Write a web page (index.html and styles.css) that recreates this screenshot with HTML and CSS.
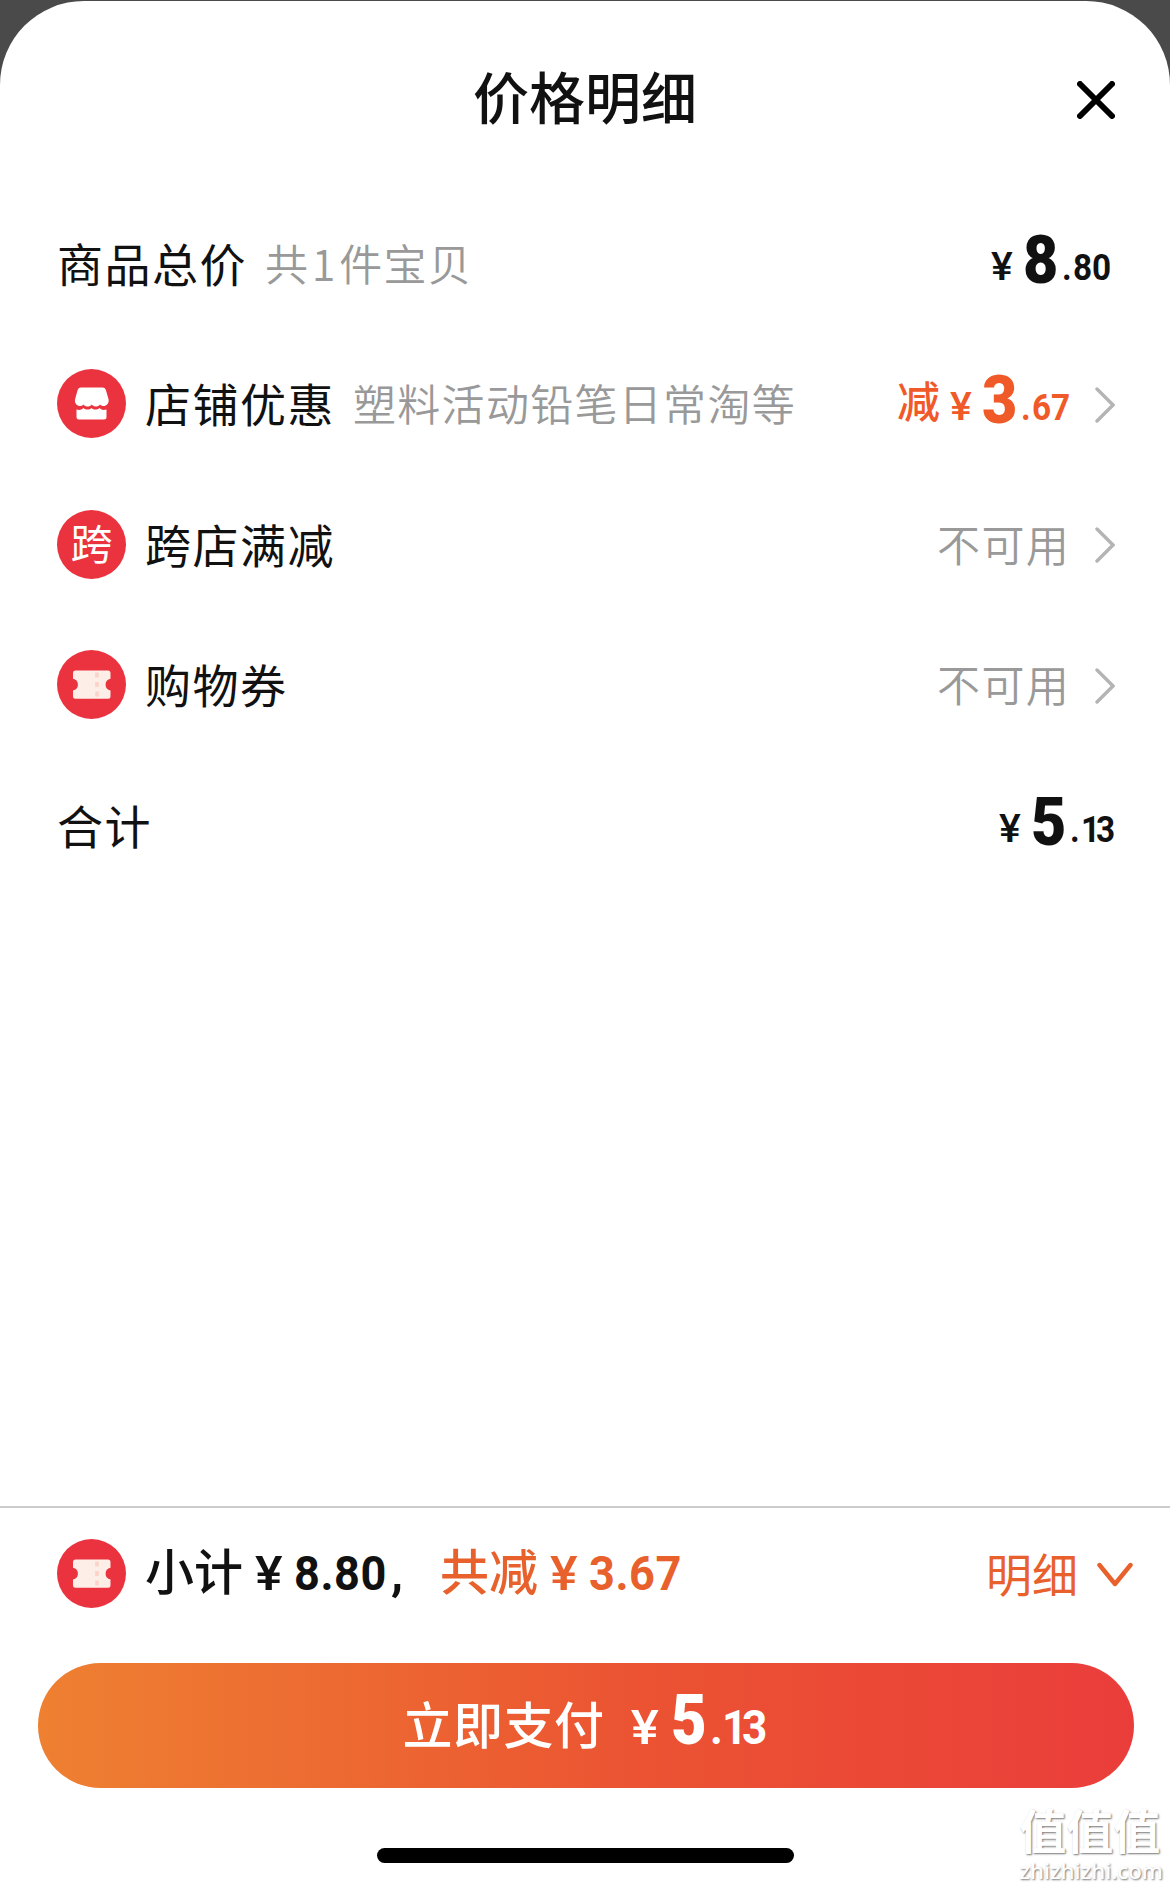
FILE: index.html
```html
<!DOCTYPE html>
<html lang="zh-CN">
<head>
<meta charset="utf-8">
<title>价格明细</title>
<link rel="stylesheet" href="styles.css">
</head>
<body>
<svg class="defs" aria-hidden="true">
  <symbol id="ticket" viewBox="0 0 69 69">
    <circle cx="34.5" cy="34.5" r="34.5" fill="#ea333f"/>
    <path d="M18.500 20.500h32.500a2.500 2.500 0 0 1 2.500 2.500v5.700a6 6 0 0 0 0 11.800v5.700a2.500 2.500 0 0 1-2.500 2.500h-32.500a2.500 2.500 0 0 1-2.500-2.500v-5.700a6 6 0 0 0 0-11.800v-5.700a2.500 2.500 0 0 1 2.500-2.500z" fill="#fdeee8"/>
    <path d="M40 22.500v5M40 32v5M40 41.500v5" stroke="#fbd3c8" stroke-width="3.600"/>
  </symbol>
  <symbol id="next" viewBox="0 0 20 36">
    <path d="M2 2 L18 18 L2 34" fill="none" stroke="#b4b4b4" stroke-width="3.400" stroke-linecap="round"/>
  </symbol>
</svg>
<main class="sheet">
  <header class="head">
    <h1 class="title">价格明细</h1>
    <svg class="close" viewBox="0 0 38 38"><path d="M3 3 35 35M35 3 3 35" stroke="#000" stroke-width="6" stroke-linecap="round"/></svg>
  </header>
  <section class="rows">
    <div class="row">
      <span class="name">商品总价</span><span class="note">共<span class="one">1</span>件宝贝</span>
      <span class="price end"><span class="yen">¥</span><b>8</b><i>.</i><span class="cents">80</span></span>
    </div>
    <div class="row">
      <svg class="badge" viewBox="0 0 69 69">
        <circle cx="34.500" cy="34.500" r="34.500" fill="#ea333f"/>
        <path d="M24 18.500h21.500a3.500 3.500 0 0 1 3.300 2.300l2.800 9.700c.8 5.500-5 8.500-8.500 5-2.400 2.800-6 2.800-8.300 0-2.300 2.800-5.900 2.800-8.300 0-3.500 3.500-9.300.5-8.500-5l2.700-9.700a3.500 3.500 0 0 1 3.300-2.300z" fill="#fff"/>
        <path d="M19.500 40.500c3 1 5 .4 7-1.400 2.500 2 5.600 2 8 0 2.400 2 5.500 2 8 0 2 1.800 4 2.400 7 1.400v7.500a2.500 2.500 0 0 1-2.500 2.500h-25a2.500 2.500 0 0 1-2.500-2.500z" fill="#fff"/>
      </svg>
      <span class="name">店铺优惠</span><span class="note">塑料活动铅笔日常淘等</span>
      <span class="price off end"><em>减</em><span class="yen">¥</span><b>3</b><i>.</i><span class="cents short">67</span></span>
      <svg class="next"><use href="#next"/></svg>
    </div>
    <div class="row">
      <span class="badge kua">跨</span>
      <span class="name">跨店满减</span>
      <span class="note end">不可用</span>
      <svg class="next"><use href="#next"/></svg>
    </div>
    <div class="row">
      <svg class="badge"><use href="#ticket"/></svg>
      <span class="name">购物券</span>
      <span class="note end">不可用</span>
      <svg class="next"><use href="#next"/></svg>
    </div>
    <div class="row">
      <span class="name">合计</span>
      <span class="price end"><span class="yen">¥</span><b>5</b><i>.</i><span class="cents thin"><span class="narrow">1</span>3</span></span>
    </div>
  </section>
  <footer class="foot">
    <div class="sum">
      <svg class="badge"><use href="#ticket"/></svg>
      <span class="sub">小计<span class="cur">¥</span><span class="num">8.80</span><span class="comma">,</span></span>
      <span class="sub save">共减<span class="cur">¥</span><span class="num">3.67</span></span>
      <span class="detail">明细</span>
      <svg class="down" viewBox="0 0 36 26"><path d="M2.500 3 18 22 33.500 3" fill="none" stroke="#e8612c" stroke-width="4.400" stroke-linecap="round" stroke-linejoin="round"/></svg>
    </div>
    <button class="pay" type="button"><span class="go">立即支付</span><span class="price"><span class="yen">¥</span><b>5</b><i>.</i><span class="cents"><span class="narrow">1</span>3</span></span></button>
    <div class="home"></div>
  </footer>
</main>
<div class="mark"><span class="mark-cn">值值值</span><span class="mark-url">zhizhizhi.com</span></div>
</body>
</html>
```

FILE: styles.css
```css
* { box-sizing: border-box; }
body {
  margin: 0;
  width: 1170px;
  height: 1887px;
  padding-top: 1px;
  background: #4a4a4a;
  color: #111;
  font-family: "Noto Sans CJK SC", sans-serif;
  position: relative;
  overflow: hidden;
}
.defs { position: absolute; width: 0; height: 0; }
.sheet {
  height: 1886px;
  display: flex;
  flex-direction: column;
  background: #fff;
  border-radius: 84px 84px 0 0;
}
.head {
  height: 192px;
  display: grid;
  grid-template-columns: 1fr auto 1fr;
  align-items: center;
}
.title { grid-column: 2; margin: 0; padding-bottom: 5px; font-size: 56px; font-weight: 500; line-height: 80px; }
.close { width: 38px; height: 38px; justify-self: end; margin-right: 55px; margin-top: 6px; }
.rows { flex: 1; padding: 0 54px 0 57px; }
.row { height: 140.500px; display: flex; align-items: center; }
.badge { flex: none; width: 69px; height: 69px; margin-right: 19px; }
.kua {
  border-radius: 50%;
  background: #ea333f;
  color: #fff;
  font-size: 42px;
  line-height: 64px;
  text-align: center;
}
.name { padding-bottom: 3px; font-size: 46px; letter-spacing: 1.500px; line-height: 66px; white-space: nowrap; }
.note { margin-left: 18px; padding-bottom: 3px; font-size: 43px; letter-spacing: 1.300px; line-height: 62px; color: #999; font-weight: 350; white-space: nowrap; }
.one { display: inline-block; width: 30px; text-align: center; }
.end { margin-left: auto; }
.next { flex: none; width: 20px; height: 36px; margin: 2px 1px 0 25px; }

/* Price figures: condensed digits in fixed-width cells */
.price { display: flex; align-items: baseline; padding-bottom: 2px; font-family: Roboto, sans-serif; font-size: 37px; font-weight: 700; line-height: 80px; }
.price b { width: 39px; font-size: 67px; transform: translateY(3px) scaleX(.91); transform-origin: left; }
.price em { margin-right: 10px; font: 500 43px/62px "Noto Sans CJK SC", sans-serif; transform: translateY(-2px); }
.price i { width: 11px; font-style: normal; transform: scaleX(.9); transform-origin: left; }
.yen { width: 32px; font-size: 38px; font-weight: 500; transform: scaleX(1.08); transform-origin: left; }
.cents { width: 43px; transform: scaleX(.9); transform-origin: left; white-space: nowrap; }
.cents.short { width: 38px; }
.cents.thin { width: 35px; }
.narrow { letter-spacing: -.12em; }
.off { color: #f05a28; }

.foot { height: 381px; border-top: 2px solid #ccc; padding: 0 36px 0 38px; display: flex; flex-direction: column; align-items: center; }
.sum { width: 100%; height: 131px; padding-left: 19px; display: flex; align-items: center; }
.sub { display: flex; align-items: baseline; padding-bottom: 4px; font-size: 49px; font-weight: 500; line-height: 70px; white-space: nowrap; }
.cur, .num, .comma { font-family: Roboto, sans-serif; transform-origin: left; }
.cur { width: 39px; margin-left: 12px; font-weight: 500; transform: scaleX(1.06); }
.num { width: 97px; font-weight: 700; letter-spacing: .6px; transform: scaleX(.92); }
.comma { width: 49px; font-weight: 700; }
.save, .detail { color: #e8612c; }
.detail { margin-left: auto; padding-bottom: 3px; font-size: 46px; line-height: 66px; }
.down { width: 36px; height: 26px; margin: 2px 1px 0 19px; }
.pay {
  flex: none;
  width: 1096px;
  height: 125px;
  margin-top: 24px;
  padding: 0 3px 0 0;
  border: 0;
  border-radius: 63px;
  background: linear-gradient(90deg, #ee8031, #eb5332 55%, #ea3d3b);
  color: #fff;
  display: flex;
  align-items: center;
  justify-content: center;
}
.go { margin-right: 18px; padding-bottom: 7px; font: 500 50px/72px "Noto Sans CJK SC", sans-serif; letter-spacing: .5px; }
.pay .price { font-size: 49px; padding-bottom: 4px; }
.pay .yen { width: 48px; padding-left: 7px; font-size: 49px; font-weight: 500; transform: translateX(-8px) scaleX(1.08); }
.pay b { font-size: 70px; transform: scaleX(.88); }
.pay i { width: 12px; }
.pay .cents { width: 45px; }
.home { flex: none; width: 417px; height: 15px; margin: 60px 1px 0 0; border-radius: 8px; background: #000; }
.mark { position: absolute; right: 7px; bottom: 4px; display: flex; flex-direction: column; color: #fff; text-shadow: 1px 1px 2px #777; }
.mark-cn { font-size: 47px; line-height: 50px; font-weight: 700; margin-bottom: 4px; }
.mark-url { font: 500 22.300px/25px "Noto Sans", sans-serif; }
```
